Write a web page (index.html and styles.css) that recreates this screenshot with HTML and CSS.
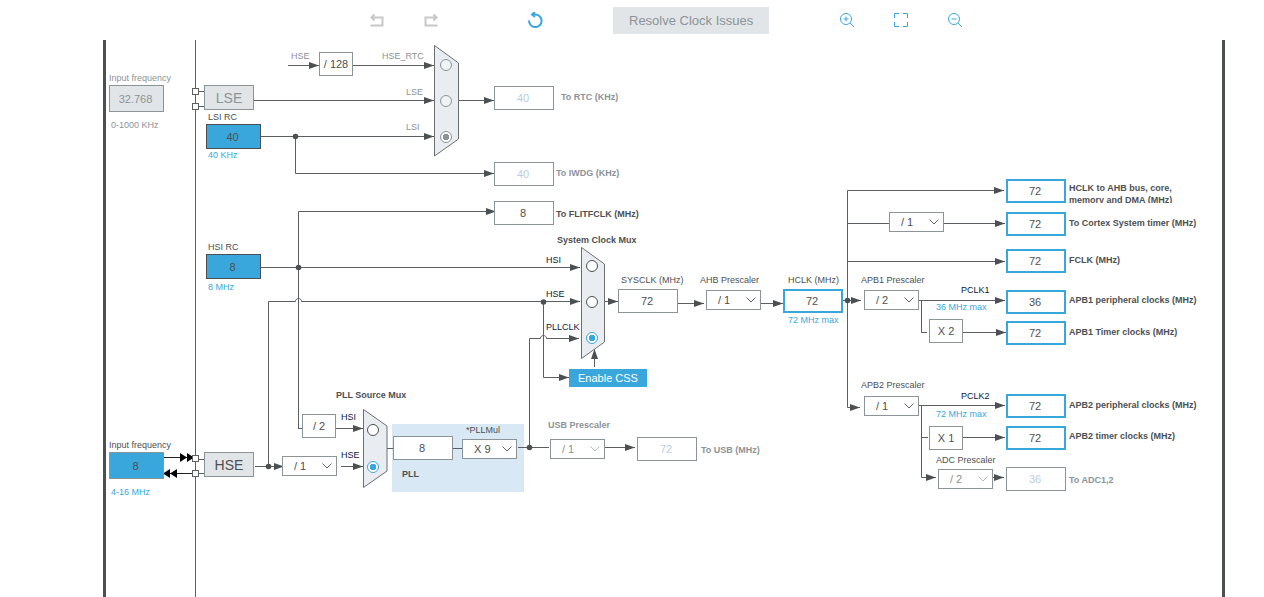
FILE: index.html
```html
<!DOCTYPE html>
<html lang="en">
<head>
<meta charset="utf-8">
<title>Clock Configuration</title>
<link rel="stylesheet" href="styles.css">
</head>
<body>
<header class="toolbar">
  <div class="tools">
    <button class="tool muted" aria-label="Undo"><svg viewBox="0 0 16 16"><path d="M2.500 5.500H13.500V13.500H1.500M5.500 2.500L2.500 5.500L5.500 8.500"/></svg></button>
    <button class="tool muted" aria-label="Redo"><svg viewBox="0 0 16 16"><path d="M13.500 5.500H2.500V13.500H14.500M10.500 2.500L13.500 5.500L10.500 8.500"/></svg></button>
  </div>
  <button class="tool reset" aria-label="Reset"><svg viewBox="0 0 16 16"><path d="M2 8.500A6.300 6.300 0 1 0 8 2.500H5.500M8 0L5 2.500L8 5"/></svg></button>
  <button class="resolve">Resolve Clock Issues</button>
  <div class="tools zooms">
    <button class="tool" aria-label="Zoom in"><svg viewBox="0 0 16 16"><circle cx="7" cy="7" r="5.500"/><path d="M11 11L15 15M4.500 7H9.500M7 4.500V9.500"/></svg></button>
    <button class="tool" aria-label="Fit"><svg viewBox="0 0 16 16"><path d="M1.500 6V1.500H6M10 1.500H14.500V6M14.500 10V14.500H10M6 14.500H1.500V10"/></svg></button>
    <button class="tool" aria-label="Zoom out"><svg viewBox="0 0 16 16"><circle cx="7" cy="7" r="5.500"/><path d="M11 11L15 15M4.500 7H9.500"/></svg></button>
  </div>
</header>
<main class="board">
  <div class="frame"></div>
  <div class="pll-panel"></div>
  <svg class="wires" viewBox="0 40 1264 557" width="1264" height="557" aria-hidden="true">
    <defs>
      <marker id="a" markerUnits="userSpaceOnUse" markerWidth="11" markerHeight="8" refX="10" refY="4" orient="auto"><path class="solid" d="M0 0.500L10 4L0 7.500Z"/></marker>
    </defs>
    <path d="M195.500 40V597"/>
    <g marker-end="url(#a)">
      <path d="M288 65.500H319"/>
      <path d="M353 65.500H434"/>
      <path d="M254 100.500H434"/>
      <path d="M261 136.500H434"/>
      <path d="M295.500 136.500V173.500H494"/>
      <path d="M459 100.500H494"/>
      <path d="M298.500 428V211.500H496"/>
      <path d="M261 267.500H580"/>
      <path d="M268.500 466V301.500H295.500C295.500 297.500 301.500 297.500 301.500 301.500H580"/>
      <path d="M255 466.500H284"/>
      <path d="M336 428.500H363"/>
      <path d="M341 466.500H363"/>
      <path d="M529.500 447V338.500H540.500C540.500 334.500 546.500 334.500 546.500 338.500H579"/>
      <path d="M543.500 301.500V377.500H569"/>
      <path d="M594.500 367V349"/>
      <path d="M605 301.500H618"/>
      <path d="M678 303.500H704"/>
      <path d="M761 303.500H783"/>
      <path d="M843 300.500H861"/>
      <path d="M605 447.500H635"/>
      <path d="M847.500 300V190.500H1004"/>
      <path d="M944 223.500H1005"/>
      <path d="M847.500 261.500H1005"/>
      <path d="M919 300.500H1005"/>
      <path d="M963 332.500H1006"/>
      <path d="M847.500 300V407.500H860"/>
      <path d="M919 405.500H1005"/>
      <path d="M963 437.500H1005"/>
      <path d="M921.500 405V477.500H936"/>
      <path d="M993 477.500H1004"/>
    </g>
    <path d="M298 428.500H302M387 448.500H393M453 448.500H462M518 447.500H549M847 223.500H889M921.500 300V332.500H927M921 437.500H928"/>
    <path d="M199 91.500H204M199 106.500H204M199 459.500H204M199 473.500H204"/>
    <g class="solid">
      <circle cx="295.500" cy="136.500" r="2.800"/><circle cx="298.500" cy="267.500" r="2.800"/>
      <circle cx="268.500" cy="466.500" r="2.800"/><circle cx="543.500" cy="302" r="2.800"/>
      <circle cx="529.500" cy="447.500" r="2.800"/><circle cx="847.500" cy="300.500" r="2.800"/>
    </g>
    <path class="pin-line" d="M164 457.500H192M192 473.500H164"/>
    <path class="pin-arrow" d="M180 453L187 457.500L180 462ZM187 453L194 457.500L187 462ZM170 469L163 473.500L170 478ZM177 469L170 473.500L177 478Z"/>
    <g class="pin"><rect x="192.500" y="88.500" width="6" height="6"/><rect x="192.500" y="103.500" width="6" height="6"/><rect x="192.500" y="455.500" width="6" height="6"/><rect x="192.500" y="470.500" width="6" height="6"/></g>
    <g class="mux">
      <path d="M434.500 45.500L458.500 63V139L434.500 156Z"/>
      <path d="M363.500 409.500L387 426V471L363.500 487.500Z"/>
      <path d="M581.500 247.500L604.500 264V342L581.500 358.500Z"/>
    </g>
  </svg>

  <label class="label off l-in-lse" for="in-lse">Input frequency</label>
  <input class="value source-off p-in-lse" id="in-lse" value="32.768" disabled>
  <span class="label off l-in-lse-range">0-1000 KHz</span>
  <button class="osc osc-off p-lse">LSE</button>
  <label class="label l-lsi" for="lsi">LSI RC</label>
  <input class="value source p-lsi" id="lsi" value="40" readonly>
  <span class="label blue l-lsi-unit">40 KHz</span>
  <label class="label l-hsi" for="hsi">HSI RC</label>
  <input class="value source p-hsi" id="hsi" value="8" readonly>
  <span class="label blue l-hsi-unit">8 MHz</span>
  <label class="label l-in-hse" for="in-hse">Input frequency</label>
  <input class="value source pin-source p-in-hse" id="in-hse" value="8">
  <span class="label blue l-in-hse-range">4-16 MHz</span>
  <button class="osc p-hse">HSE</button>

  <span class="label off l-rtc-hse">HSE</span>
  <span class="factor p-rtc-div">/ 128</span>
  <span class="label off l-hse-rtc">HSE_RTC</span>
  <span class="label off l-rtc-lse">LSE</span>
  <span class="label off l-rtc-lsi">LSI</span>
  <input type="radio" class="pick p-r1" name="rtc" aria-label="HSE_RTC" disabled>
  <input type="radio" class="pick p-r2" name="rtc" aria-label="LSE" disabled>
  <input type="radio" class="pick p-r3" name="rtc" aria-label="LSI" disabled checked>
  <input class="value idle p-rtc" id="rtc" value="40" disabled>
  <label class="label bold off l-rtc" for="rtc">To RTC (KHz)</label>
  <input class="value idle p-iwdg" id="iwdg" value="40" disabled>
  <label class="label bold off l-iwdg" for="iwdg">To IWDG (KHz)</label>
  <input class="value p-flitf" id="flitf" value="8" readonly>
  <label class="label bold l-flitf" for="flitf">To FLITFCLK (MHz)</label>

  <span class="label bold l-sysmux">System Clock Mux</span>
  <span class="label navy l-sys-hsi">HSI</span>
  <span class="label navy l-sys-hse">HSE</span>
  <span class="label navy l-sys-pll">PLLCLK</span>
  <input type="radio" class="pick p-s1" name="sys" aria-label="HSI">
  <input type="radio" class="pick p-s2" name="sys" aria-label="HSE">
  <input type="radio" class="pick p-s3" name="sys" aria-label="PLLCLK" checked>
  <button class="css-button">Enable CSS</button>

  <span class="label bold l-pllmux">PLL Source Mux</span>
  <span class="factor p-pll-div">/ 2</span>
  <select class="choice p-hse-div" aria-label="HSE divider"><option>/ 1</option></select>
  <span class="label navy l-pll-hsi">HSI</span>
  <span class="label navy l-pll-hse">HSE</span>
  <input type="radio" class="pick p-p1" name="pll" aria-label="HSI">
  <input type="radio" class="pick p-p2" name="pll" aria-label="HSE" checked>
  <input class="value p-pll" id="pll" value="8" readonly>
  <label class="label bold l-pll" for="pll">PLL</label>
  <label class="label l-pllmul" for="pllmul">*PLLMul</label>
  <select class="choice p-pllmul" id="pllmul"><option>X 9</option></select>

  <label class="label bold off l-usbpre" for="usbpre">USB Prescaler</label>
  <select class="choice p-usbpre" id="usbpre" disabled><option>/ 1</option></select>
  <input class="value idle p-usb" id="usb" value="72" disabled>
  <label class="label bold off l-usb" for="usb">To USB (MHz)</label>

  <label class="label l-sysclk" for="sysclk">SYSCLK (MHz)</label>
  <input class="value p-sysclk" id="sysclk" value="72" readonly>
  <label class="label l-ahb" for="ahb">AHB Prescaler</label>
  <select class="choice p-ahb" id="ahb"><option>/ 1</option></select>
  <label class="label l-hclk" for="hclk">HCLK (MHz)</label>
  <input class="value live p-hclk" id="hclk" value="72">
  <span class="label blue l-hclk-max">72 MHz max</span>

  <input class="value live p-core" id="core" value="72">
  <label class="label bold l-core" for="core">HCLK to AHB bus, core, memory and DMA (MHz)</label>
  <select class="choice p-ctxpre" aria-label="Cortex prescaler"><option>/ 1</option></select>
  <input class="value live p-cortex" id="cortex" value="72">
  <label class="label bold l-cortex" for="cortex">To Cortex System timer (MHz)</label>
  <input class="value live p-fclk" id="fclk" value="72">
  <label class="label bold l-fclk" for="fclk">FCLK (MHz)</label>

  <label class="label l-apb1pre" for="apb1pre">APB1 Prescaler</label>
  <select class="choice p-apb1pre" id="apb1pre"><option>/ 2</option></select>
  <span class="label navy l-pclk1">PCLK1</span>
  <span class="label blue l-pclk1-max">36 MHz max</span>
  <input class="value live p-apb1" id="apb1" value="36">
  <label class="label bold l-apb1" for="apb1">APB1 peripheral clocks (MHz)</label>
  <span class="factor p-x2">X 2</span>
  <input class="value live p-apb1t" id="apb1t" value="72">
  <label class="label bold l-apb1t" for="apb1t">APB1 Timer clocks (MHz)</label>

  <label class="label l-apb2pre" for="apb2pre">APB2 Prescaler</label>
  <select class="choice p-apb2pre" id="apb2pre"><option>/ 1</option></select>
  <span class="label navy l-pclk2">PCLK2</span>
  <span class="label blue l-pclk2-max">72 MHz max</span>
  <input class="value live p-apb2" id="apb2" value="72">
  <label class="label bold l-apb2" for="apb2">APB2 peripheral clocks (MHz)</label>
  <span class="factor p-x1">X 1</span>
  <input class="value live p-apb2t" id="apb2t" value="72">
  <label class="label bold l-apb2t" for="apb2t">APB2 timer clocks (MHz)</label>
  <label class="label l-adcpre" for="adcpre">ADC Prescaler</label>
  <select class="choice p-adcpre" id="adcpre" disabled><option>/ 2</option></select>
  <input class="value idle p-adc" id="adc" value="36" disabled>
  <label class="label bold off l-adc" for="adc">To ADC1,2</label>
</main>
</body>
</html>
```

FILE: styles.css
```css
:root {
  --ink: #4d5052;
  --muted: #8c9399;
  --blue: #39a7dc;
  --grey: #e1e5e8;
}

* { box-sizing: border-box; }

body {
  margin: 0;
  height: 100vh;
  display: flex;
  flex-direction: column;
  background: #fff;
  color: var(--ink);
  font-family: "Liberation Sans", Arial, sans-serif;
}

button, input, select { font-family: inherit; margin: 0; }

/* Toolbar */
.toolbar {
  display: flex;
  align-items: center;
  flex: none;
  height: 40px;
  padding-left: 369px;
}
.tools { display: flex; gap: 38px; }
.tool {
  width: 16px;
  height: 16px;
  padding: 0;
  border: 0;
  background: none;
  color: var(--blue);
}
.tool svg {
  display: block;
  fill: none;
  stroke: currentColor;
  stroke-width: 1;
}
.muted { color: #c8c8c8; }
.muted svg, .reset svg { stroke-width: 2; }
.reset { margin: 0 70px 0 88px; }
.resolve {
  height: 27px;
  padding: 0 16px;
  border: 0;
  background: var(--grey);
  color: var(--muted);
  font-size: 13px;
  white-space: nowrap;
}
.zooms { margin-left: 70px; }

/* Diagram canvas */
.board {
  position: relative;
  flex: 1;
  min-height: 0;
  overflow: hidden;
}
.frame {
  position: absolute;
  inset: 0 39px 0 103px;
  border: solid var(--ink);
  border-width: 0 3px;
}
.pll-panel {
  position: absolute;
  left: 392px;
  top: 384px;
  width: 132px;
  height: 68px;
  background: #d9e8f5;
}
.wires {
  position: absolute;
  left: 0;
  top: 0;
  fill: none;
  stroke: #5c5f61;
}
.solid { fill: var(--ink); stroke: none; }
.pin { fill: #fff; }
.pin-line { stroke: #222; }
.pin-arrow { fill: #000; stroke: none; }
.mux { fill: #e9edf1; stroke: #6c7072; }

.label {
  position: absolute;
  font-size: 9px;
  line-height: 12px;
  white-space: nowrap;
}
.bold { font-weight: bold; }
.off { color: var(--muted); }
.blue { color: var(--blue); }
.navy { color: #0a1a3c; }

.value, .factor, .choice, .osc, .pick, .css-button { position: absolute; }
.value, .factor, .choice {
  border: 1px solid var(--muted);
  border-radius: 0;
  background: #fff;
  color: var(--ink);
  font-size: 11px;
}
.value {
  width: 60px;
  height: 24px;
  padding: 0 2px 0 0;
  text-align: center;
}
.live { border: 2px solid var(--blue); }
.idle { color: #b9cde2; }
.source {
  width: 55px;
  height: 25px;
  background: var(--blue);
  border-color: var(--ink);
}
.pin-source { height: 27px; border-color: var(--muted); }
.source-off {
  width: 55px;
  height: 27px;
  background: var(--grey);
  color: var(--muted);
}
.factor {
  width: 34px;
  height: 24px;
  line-height: 22px;
  text-align: center;
  white-space: nowrap;
}
.choice {
  width: 55px;
  height: 20px;
  padding: 0 0 0 11px;
  appearance: none;
  background: #fff url("data:image/svg+xml,%3Csvg xmlns='http://www.w3.org/2000/svg' width='10' height='6'%3E%3Cpath d='M.5 .5L5 5L9.500 .5' fill='none' stroke='%23606468'/%3E%3C/svg%3E") no-repeat right 4px center;
}
.choice:disabled {
  color: var(--muted);
  opacity: 1;
  background-image: url("data:image/svg+xml,%3Csvg xmlns='http://www.w3.org/2000/svg' width='10' height='6'%3E%3Cpath d='M.5 .5L5 5L9.500 .5' fill='none' stroke='%23b8bcc0'/%3E%3C/svg%3E");
}
.osc {
  width: 50px;
  height: 25px;
  padding: 0;
  border: 1px solid var(--muted);
  background: var(--grey);
  color: var(--ink);
  font-size: 14px;
}
.osc-off { color: var(--muted); }
.css-button {
  left: 569px;
  top: 329px;
  width: 78px;
  height: 18px;
  padding: 0;
  border: 0;
  background: var(--blue);
  color: #fff;
  font-size: 11px;
}
.pick {
  width: 12px;
  height: 12px;
  appearance: none;
  border: 1px solid var(--ink);
  border-radius: 50%;
  background: #fff;
}
.pick:checked {
  border-color: var(--blue);
  background: radial-gradient(circle, var(--blue) 0 3px, #fff 3px);
}
.pick:disabled { border-color: var(--muted); background: #f0f3f5; }
.pick:disabled:checked { background: radial-gradient(circle, var(--muted) 0 3px, #fff 3px); }

/* Oscillators and input pins */
.l-in-lse { left: 109px; top: 32px; }
.p-in-lse { left: 109px; top: 45px; }
.l-in-lse-range { left: 111px; top: 79px; }
.p-lse { left: 204px; top: 45px; }
.l-lsi { left: 208px; top: 71px; }
.p-lsi { left: 206px; top: 84px; }
.l-lsi-unit { left: 208px; top: 109px; }
.l-hsi { left: 208px; top: 201px; }
.p-hsi { left: 206px; top: 214px; }
.l-hsi-unit { left: 208px; top: 241px; }
.l-in-hse { left: 109px; top: 399px; }
.p-in-hse { left: 109px; top: 412px; }
.l-in-hse-range { left: 111px; top: 446px; }
.p-hse { left: 204px; top: 412px; }

/* RTC, watchdog and flash */
.l-rtc-hse { left: 291px; top: 10px; }
.p-rtc-div { left: 319px; top: 12px; }
.l-hse-rtc { left: 382px; top: 10px; }
.l-rtc-lse { left: 406px; top: 46px; }
.l-rtc-lsi { left: 406px; top: 81px; }
.p-r1 { left: 440px; top: 19px; }
.p-r2 { left: 440px; top: 55px; }
.p-r3 { left: 440px; top: 91px; }
.p-rtc { left: 494px; top: 46px; }
.l-rtc { left: 561px; top: 51px; }
.p-iwdg { left: 494px; top: 122px; }
.l-iwdg { left: 556px; top: 127px; }
.p-flitf { left: 494px; top: 161px; }
.l-flitf { left: 556px; top: 168px; }

/* System clock mux */
.l-sysmux { left: 557px; top: 194px; }
.l-sys-hsi { left: 546px; top: 214px; }
.l-sys-hse { left: 546px; top: 248px; }
.l-sys-pll { left: 546px; top: 281px; }
.p-s1 { left: 586px; top: 220px; }
.p-s2 { left: 586px; top: 256px; }
.p-s3 { left: 586px; top: 292px; }

/* PLL */
.l-pllmux { left: 336px; top: 349px; }
.p-pll-div { left: 302px; top: 374px; }
.p-hse-div { left: 282px; top: 416px; }
.l-pll-hsi { left: 341px; top: 371px; }
.l-pll-hse { left: 341px; top: 409px; }
.p-p1 { left: 367px; top: 384px; }
.p-p2 { left: 367px; top: 421px; }
.p-pll { left: 393px; top: 396px; }
.l-pll { left: 402px; top: 428px; }
.l-pllmul { left: 466px; top: 384px; }
.p-pllmul { left: 462px; top: 399px; }

/* USB */
.l-usbpre { left: 548px; top: 379px; }
.p-usbpre { left: 550px; top: 399px; }
.p-usb { left: 637px; top: 397px; }
.l-usb { left: 701px; top: 404px; }

/* SYSCLK to HCLK */
.l-sysclk { left: 621px; top: 234px; }
.p-sysclk { left: 618px; top: 249px; }
.l-ahb { left: 700px; top: 234px; }
.p-ahb { left: 706px; top: 250px; }
.l-hclk { left: 788px; top: 234px; }
.p-hclk { left: 783px; top: 249px; }
.l-hclk-max { left: 788px; top: 274px; }

/* Core outputs */
.p-core { left: 1006px; top: 139px; }
.l-core {
  left: 1069px;
  top: 142px;
  width: 125px;
  height: 21px;
  overflow: hidden;
  white-space: normal;
}
.p-ctxpre { left: 889px; top: 172px; }
.p-cortex { left: 1006px; top: 172px; }
.l-cortex { left: 1069px; top: 177px; }
.p-fclk { left: 1006px; top: 209px; }
.l-fclk { left: 1069px; top: 214px; }

/* APB1 */
.l-apb1pre { left: 861px; top: 234px; }
.p-apb1pre { left: 864px; top: 250px; }
.l-pclk1 { left: 961px; top: 244px; }
.l-pclk1-max { left: 936px; top: 261px; }
.p-apb1 { left: 1006px; top: 250px; }
.l-apb1 { left: 1069px; top: 254px; }
.p-x2 { left: 929px; top: 279px; }
.p-apb1t { left: 1006px; top: 281px; }
.l-apb1t { left: 1069px; top: 286px; }

/* APB2 and ADC */
.l-apb2pre { left: 861px; top: 339px; }
.p-apb2pre { left: 864px; top: 356px; }
.l-pclk2 { left: 961px; top: 350px; }
.l-pclk2-max { left: 936px; top: 368px; }
.p-apb2 { left: 1006px; top: 354px; }
.l-apb2 { left: 1069px; top: 359px; }
.p-x1 { left: 929px; top: 386px; }
.p-apb2t { left: 1006px; top: 386px; }
.l-apb2t { left: 1069px; top: 390px; }
.l-adcpre { left: 936px; top: 414px; }
.p-adcpre { left: 938px; top: 429px; }
.p-adc { left: 1006px; top: 427px; }
.l-adc { left: 1069px; top: 434px; }
```
